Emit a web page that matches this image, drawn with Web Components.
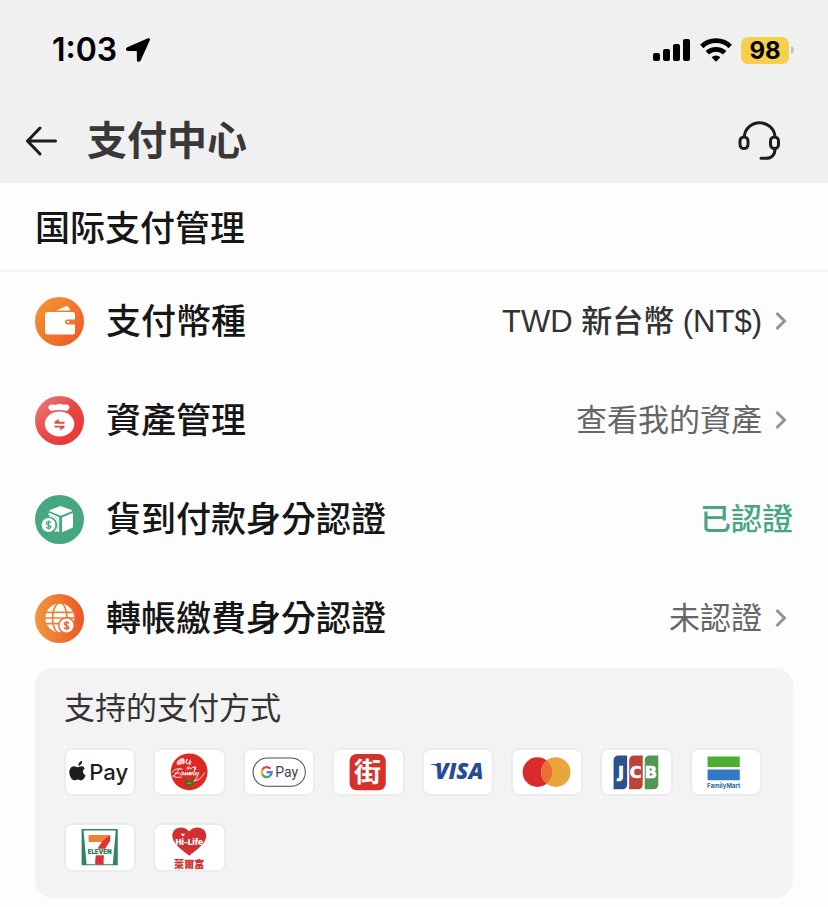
<!DOCTYPE html>
<html lang="zh-Hant">
<head>
<meta charset="utf-8">
<meta name="viewport" content="width=device-width, initial-scale=1">
<title>支付中心</title>
<style>
  body {
    margin: 0;
    background-color: #fdfdfd;
    color: #161616;
    font-family: "Liberation Sans", "Noto Sans CJK TC", sans-serif;
  }
</style>
</head>
<body>
<payment-center></payment-center>

<script>
class StatusBar extends HTMLElement {
  constructor() {
    super();
    this.attachShadow({ mode: "open" });
  }

  connectedCallback() {
    this.shadowRoot.innerHTML = `
      <style>
        :host {
          display: flex;
          align-items: center;
          justify-content: space-between;
          height: 100px;
          padding: 0 33px 0 52px;
          color: #000;
          font-family: Inter, sans-serif;
        }
        .group { display: flex; align-items: center; gap: 9px; }
        .time { font-size: 32px; font-weight: 600; line-height: 40px; }
        .battery { display: flex; align-items: center; gap: 2px; }
        .level {
          width: 48px;
          border-radius: 7px;
          background-color: #f8cf48;
          font-size: 24px;
          font-weight: 700;
          line-height: 27px;
          text-align: center;
        }
        svg { display: block; }
      </style>
      <div class="group">
        <span class="time">${this.getAttribute("time")}</span>
        <svg width="24" height="24" viewBox="0 0 24 24" aria-hidden="true">
          <path d="M22 .3 1.300 9.300c-2 1-1.500 3.700.7 3.700l8 .1c.6 0 .8.2.8.8l.1 8c0 2.300 2.800 2.700 3.800.6L23.900 2c.5-1.200-.6-2.300-1.900-1.700Z"/>
        </svg>
      </div>
      <div class="group">
        <svg width="38" height="24" viewBox="0 0 38 24" aria-hidden="true">
          <rect x="0" y="15" width="7" height="8" rx="2"/>
          <rect x="10" y="11" width="7" height="12" rx="2"/>
          <rect x="20" y="6" width="7" height="17" rx="2"/>
          <rect x="30" y="1" width="7" height="22" rx="2"/>
        </svg>
        <svg width="32" height="24" viewBox="0 0 32 24" aria-hidden="true">
          <g fill="none" stroke="#000" stroke-width="4.800">
            <path d="M1.800 8.400a20.500 20.500 0 0 1 28.400 0"/>
            <path d="M7.300 14.800a12.600 12.600 0 0 1 17.400 0"/>
          </g>
          <path d="M11.600 19.200a6.600 6.600 0 0 1 8.800 0L16 23.700Z"/>
        </svg>
        <div class="battery">
          <span class="level">${this.getAttribute("battery")}</span>
          <svg width="4" height="10" viewBox="0 0 4 10" aria-hidden="true"><path d="M0 1c4 2 4 6 0 8Z" fill="#b5c6c6"/></svg>
        </div>
      </div>
    `;
  }
}
customElements.define("status-bar", StatusBar);


class NavBar extends HTMLElement {
  constructor() {
    super();
    this.attachShadow({ mode: "open" });
  }

  connectedCallback() {
    this.shadowRoot.innerHTML = `
      <style>
        :host {
          display: flex;
          align-items: center;
          height: 82px;
          padding: 0 48px 0 25px;
        }
        button {
          padding: 0;
          border: 0;
          background: none;
          cursor: pointer;
        }
        svg { display: block; fill: none; stroke: #1c1c18; stroke-linecap: round; stroke-linejoin: round; stroke-width: 3; }
        h1 {
          flex: 1;
          margin: 0 0 0 30px;
          color: #383838;
          font-size: 40px;
          font-weight: 700;
          line-height: 60px;
        }
      </style>
      <button type="button" aria-label="返回">
        <svg width="32" height="30" viewBox="0 0 32 30"><path d="M15 2 2.500 15 15 28M2.500 15H30.500"/></svg>
      </button>
      <h1><slot></slot></h1>
      <button type="button" aria-label="客服">
        <svg width="42" height="42" viewBox="0 0 42 42">
          <path d="M6.300 16.500a15.400 15 0 0 1 30.700 0M37 29c0 6-3.500 9.300-9 9.300h-5"/>
          <rect x="2" y="17" width="8" height="11.500" rx="4"/>
          <rect x="32.500" y="17" width="8" height="11.500" rx="4"/>
        </svg>
      </button>
    `;
  }
}
customElements.define("nav-bar", NavBar);


class PayRow extends HTMLElement {
  constructor() {
    super();
    this.attachShadow({ mode: "open" });
  }

  connectedCallback() {
    const href = this.getAttribute("href");
    const content = `
      <slot name="icon"></slot>
      <span class="label">${this.getAttribute("label")}</span>
      <span class="value"><slot></slot></span>
    `;
    const chevron = `<svg width="18" height="22" viewBox="0 0 18 22" aria-hidden="true"><path d="m1.500 2 8 8-8 8"/></svg>`;

    this.shadowRoot.innerHTML = `
      <style>
        :host { display: block; --value-color: #666; --value-weight: 400; }
        :host([tone="dark"]) { --value-color: #333; --value-weight: 500; }
        :host([tone="success"]) { --value-color: #47a582; --value-weight: 500; }
        .row {
          display: flex;
          align-items: center;
          height: 99px;
          padding: 0 35px;
          color: inherit;
          text-decoration: none;
        }
        ::slotted(svg) { flex: none; width: 49px; height: 49px; }
        .label {
          flex: 1;
          margin-left: 22px;
          font-size: 35px;
          font-weight: 500;
          line-height: 52px;
        }
        .value {
          color: var(--value-color);
          font-size: 31px;
          font-weight: var(--value-weight);
          line-height: 46px;
          white-space: nowrap;
        }
        .row > svg { margin-left: 13px; fill: none; stroke: #94948f; stroke-width: 3; }
      </style>
      ${href ? `<a class="row" href="${href}">${content}${chevron}</a>` : `<div class="row">${content}</div>`}
    `;
  }
}
customElements.define("pay-row", PayRow);


class PayCard extends HTMLElement {
  constructor() {
    super();
    this.attachShadow({ mode: "open" });
  }

  connectedCallback() {
    this.shadowRoot.innerHTML = `
      <style>
        :host {
          display: block;
          border-radius: 8px;
          background-color: #fff;
          box-shadow: inset 0 0 0 2px #ececec;
        }
        ::slotted(svg) { display: block; width: 100%; }
      </style>
      <slot></slot>
    `;
  }
}
customElements.define("pay-card", PayCard);


class PayMethods extends HTMLElement {
  constructor() {
    super();
    this.attachShadow({ mode: "open" });
  }

  connectedCallback() {
    this.shadowRoot.innerHTML = `
      <style>
        :host {
          display: block;
          margin: 0 35px;
          padding: 18px 31px 26px 29px;
          border-radius: 18px;
          background-color: #f3f3f3;
        }
        h3 {
          margin: 0 0 16px;
          color: #333;
          font-size: 31px;
          font-weight: 400;
          line-height: 46px;
        }
        .grid {
          display: grid;
          grid-template-columns: repeat(8, 1fr);
          gap: 27px 17px;
        }
      </style>
      <h3>${this.getAttribute("heading")}</h3>
      <div class="grid"><slot></slot></div>
    `;
  }
}
customElements.define("pay-methods", PayMethods);


class PaymentCenter extends HTMLElement {
  constructor() {
    super();
    this.attachShadow({ mode: "open" });
  }

  connectedCallback() {
    this.shadowRoot.innerHTML = `
      <style>
        :host { display: block; padding-bottom: 10px; }
        header { padding-bottom: 1px; background-color: #f0f0f0; }
        h2 {
          margin: 0;
          padding: 17px 35px 18px;
          border-bottom: 2px solid #f3f3f3;
          font-family: "Noto Sans CJK SC", sans-serif;
          font-size: 35px;
          font-weight: 500;
          line-height: 52px;
        }
        text { font-family: Inter, sans-serif; }
      </style>

      <header>
        <status-bar time="1:03" battery="98"></status-bar>
        <nav-bar>支付中心</nav-bar>
      </header>

      <main>
        <h2 lang="zh-Hans">国际支付管理</h2>

        <pay-row label="支付幣種" href="#currency" tone="dark">
          <svg slot="icon" viewBox="0 0 49 49" aria-hidden="true">
            <defs>
              <linearGradient id="orange" x1="0" y1="0" x2="1" y2="1">
                <stop offset="0" stop-color="#f59a32"/><stop offset="1" stop-color="#ec5528"/>
              </linearGradient>
            </defs>
            <circle cx="24.500" cy="24.500" r="24.500" fill="url(#orange)"/>
            <path d="M21 13.500 31 9.200q1.500-.7 2.400.8l2.100 3.500Z" fill="#fff"/>
            <path d="M12.500 15h25a2.500 2.500 0 0 1 2.500 2.500V35a2.500 2.500 0 0 1-2.500 2.500h-25A2.500 2.500 0 0 1 10 35V17.500A2.500 2.500 0 0 1 12.500 15Z" fill="#fff"/>
            <path d="M40.500 22.500h-8a2.500 2.500 0 0 0 0 5h8Z" fill="#ef742c"/>
            <circle cx="33" cy="25" r="1.300" fill="#fff"/>
          </svg>
          TWD 新台幣 (NT$)
        </pay-row>

        <pay-row label="資產管理" href="#assets">
          <svg slot="icon" viewBox="0 0 49 49" aria-hidden="true">
            <defs>
              <linearGradient id="red" x1="0" y1="0" x2="1" y2="1">
                <stop offset="0" stop-color="#e98080"/><stop offset=".5" stop-color="#e84746"/><stop offset="1" stop-color="#e8322c"/>
              </linearGradient>
            </defs>
            <circle cx="24.500" cy="24.500" r="24.500" fill="url(#red)"/>
            <path d="M16 15c-3.500-2-3.500-5.800.2-6.500 2.300-.4 3.500.5 4.900.2 1.800-.9 4.600-1.500 6.400-.1 1.700.7 4.500-1 6.300.9 1.600 1.800.3 4-2.300 5.500-4.700-1.500-10.800-1.500-15.500 0Z" fill="#fff"/>
            <ellipse cx="24.500" cy="28" rx="14.800" ry="12.500" fill="#fff"/>
            <g fill="#e5494a">
              <path d="M19.500 27.700v-1.900l4.300-2.800v2.800h5.700v1.900Z"/>
              <path d="M29.500 29.700v1.900l-4.300 2.800v-2.800h-5.700v-1.900Z"/>
            </g>
          </svg>
          查看我的資產
        </pay-row>

        <pay-row label="貨到付款身分認證" tone="success">
          <svg slot="icon" viewBox="0 0 49 49" aria-hidden="true">
            <circle cx="24.500" cy="24.500" r="24.500" fill="#45a880"/>
            <g fill="#fff" stroke="#fff" stroke-linejoin="round">
              <path d="m25.500 11.500 11.500 4.200-11.300 4.600-11.200-4.600Z"/>
              <path d="m27.500 22.800 10-4.200v13.600l-10 4.400Z"/>
              <path d="m14 18.300 9.700 4.200v14.100L14 32.500Z"/>
            </g>
            <circle cx="14" cy="30" r="9.800" fill="#45a880"/>
            <path d="M14.500 21.200a8.800 8.800 0 0 1 5.500 15.300" fill="none" stroke="#fff" stroke-width="1.300"/>
            <circle cx="13.500" cy="30" r="6.900" fill="#fff"/>
            <path d="M15.700 28.200c-.2-2-4.300-2.100-4.300 0s4.400 1.600 4.400 3.600-4.400 2.100-4.500 0M13.500 25.500v9" fill="none" stroke="#45a880" stroke-width="1.300"/>
          </svg>
          已認證
        </pay-row>

        <pay-row label="轉帳繳費身分認證" href="#transfer">
          <svg slot="icon" viewBox="0 0 49 49" aria-hidden="true">
            <defs>
              <linearGradient id="amber" x1="0" y1="0" x2="1" y2="0">
                <stop offset="0" stop-color="#ee993d"/><stop offset="1" stop-color="#ed5526"/>
              </linearGradient>
            </defs>
            <circle cx="24.500" cy="24.500" r="24.500" fill="url(#amber)"/>
            <circle cx="24.800" cy="24" r="14.500" fill="#fff"/>
            <g fill="none" stroke="#ee8034" stroke-width="1.700">
              <path d="M10 18.300h30M10 24h30M10 29.700h30"/>
              <ellipse cx="24.800" cy="24" rx="7.300" ry="15"/>
            </g>
            <circle cx="31.500" cy="31.500" r="8.400" fill="#ed6c2e"/>
            <circle cx="31.500" cy="31.500" r="7" fill="#fff"/>
            <path d="M33.700 29.700c-.2-2-4.300-2.100-4.300 0s4.400 1.600 4.400 3.600-4.400 2.100-4.500 0M31.500 27v9" fill="none" stroke="#e9652c" stroke-width="1.400"/>
          </svg>
          未認證
        </pay-row>

        <pay-methods heading="支持的支付方式">
          <pay-card>
            <svg viewBox="0 0 72 48" role="img" aria-label="Apple Pay">
              <g fill="#1d1d1f">
                <path d="M14.300 17.700C14 15.300 15.700 13.300 17.900 13c.4 2.300-1.400 4.600-3.600 4.700ZM20.600 20.300c-2.600 1.800-2.300 5.400.9 6.800-.7 2.200-2.400 4.900-4.200 5.100-1.400.1-1.900-.8-3.500-.8s-2.200.8-3.500.8c-2.700.1-5-4.500-5-8 0-3.900 2.400-6 4.800-6 1.500 0 2.700.9 3.600.9.9 0 2.300-1.100 4.200-.9 1.100.1 2.100.6 2.700 2.100Z"/>
                <text x="25" y="32" font-size="22" font-weight="500">Pay</text>
              </g>
            </svg>
          </pay-card>

          <pay-card>
            <svg viewBox="0 0 72 48" role="img" aria-label="We Are Family">
              <circle cx="36" cy="23.700" r="18.300" fill="#dc2a22"/>
              <ellipse cx="27.500" cy="13.500" rx="4.500" ry="2.600" transform="rotate(-35 27.500 13.500)" fill="#f7c9c4"/>
              <g fill="none" stroke="#fff" stroke-linecap="round" stroke-width=".9">
                <path d="M29 12c2-2 2 1 1 4 2-1 3-3 4-5-1 3-1 5 0 5s2-2 3-4M36 16c1.500-.5 3-2.500 1.500-2.500s-2.500 3 0 3"/>
                <path d="M36 19c-2-1-3 2-1.500 2s2-2 2-2 0 2 1 2 1-2 2-2 1-.5 1 .5M41 21c2-.5 2-2.500 1-2.500s-1.500 2.500.5 2.500"/>
                <path d="M19 24c2-3 6-4 10-3M26 21c-2 3-3 6-6 7M22 25h4M30 24c-2-1-4 3-2 3s2-3 2-3 0 3 1 3l1.500-3v3l2-3v3l2-3-.5 3 2-3-.5 3c1 0 2-2 2-3M42 20l-2 7c1.500 0 2.500-2 3-3l-.5 3c1.500 0 2.500-3 3-3-.5 3-2 7-5 9"/>
                <path d="M20 28c2 2 6 1 8 1M39 33c5 0 10-3 12-8"/>
              </g>
              <path d="M31.500 30.500h3v2.500h3v-2.500h3v6q-4.500 2.500-9 0Z" fill="#4a6a25"/>
              <path d="M34 35h4" stroke="#e3983a"/>
            </svg>
          </pay-card>

          <pay-card>
            <svg viewBox="0 0 72 48" role="img" aria-label="Google Pay">
              <rect x="10" y="10" width="52" height="28" rx="14" fill="#fff" stroke="#4d4e50"/>
              <g fill="none" stroke-width="2.400">
                <path d="M27.300 20.700a5 5 0 0 0-8.100.9" stroke="#e2483d"/>
                <path d="M19.200 21.600a5 5 0 0 0 0 4.800" stroke="#f2b72c"/>
                <path d="M19.200 26.400a5 5 0 0 0 7.200 1.700" stroke="#45a35b"/>
                <path d="M26.400 28.100a5 5 0 0 0 2.100-3.900h-5" stroke="#4a83e8"/>
              </g>
              <text x="32" y="29" font-size="14" fill="#454649" style="font-family: Roboto, sans-serif">Pay</text>
            </svg>
          </pay-card>

          <pay-card>
            <svg viewBox="0 0 72 48" role="img" aria-label="街口支付">
              <rect x="17.500" y="6" width="36" height="36" rx="7" fill="#d6302b"/>
              <text x="35.500" y="33.500" font-size="27" font-weight="700" text-anchor="middle" fill="#fff" style="font-family: 'Noto Sans CJK TC', sans-serif">街</text>
            </svg>
          </pay-card>

          <pay-card>
            <svg viewBox="0 0 72 48" role="img" aria-label="VISA">
              <path d="M8.500 16h8l2 5c-2.500-2.400-5.500-4-10-4.500Z" fill="#274b96"/>
              <text x="37" y="31" font-size="22" font-weight="800" font-style="italic" text-anchor="middle" fill="#274b96" style="font-family: 'Open Sans', sans-serif">VISA</text>
            </svg>
          </pay-card>

          <pay-card>
            <svg viewBox="0 0 72 48" role="img" aria-label="Mastercard">
              <circle cx="26.300" cy="24" r="14.700" fill="#d92b2c"/>
              <circle cx="44.500" cy="24" r="14.700" fill="#e8a63d"/>
              <path d="M35.400 12.500a14.700 14.700 0 0 1 0 23 14.700 14.700 0 0 1 0-23Z" fill="#ea7136"/>
            </svg>
          </pay-card>

          <pay-card>
            <svg viewBox="0 0 72 48" role="img" aria-label="JCB">
              <path d="M18.500 7.500h8.500v29a5 5 0 0 1-5 4.500h-8.500V12a5 5 0 0 1 5-4.500Z" fill="#2d508f"/>
              <path d="M34 7.500h8.500v29a5 5 0 0 1-5 4.500H29V12a5 5 0 0 1 5-4.500Z" fill="#bd4339"/>
              <path d="M49.500 7.500H58v29a5 5 0 0 1-5 4.500h-8.500V12a5 5 0 0 1 5-4.500Z" fill="#529653"/>
              <g fill="#fff" stroke="#fff" stroke-width=".6" font-size="16" font-weight="700" text-anchor="middle">
                <text style="font-family: 'DejaVu Sans', sans-serif" y="30"><tspan x="21">J</tspan><tspan x="35.500">C</tspan><tspan x="50.500">B</tspan></text>
              </g>
            </svg>
          </pay-card>

          <pay-card>
            <svg viewBox="0 0 72 48" role="img" aria-label="FamilyMart">
              <path d="M17.500 8.500h32V19h-32Z" fill="#4eae32"/>
              <path d="M17.500 21.500h32V32h-32Z" fill="#3278c6"/>
              <text x="33.500" y="40" font-size="6" font-weight="700" text-anchor="middle" fill="#2a64a6">FamilyMart</text>
            </svg>
          </pay-card>

          <pay-card>
            <svg viewBox="0 0 72 48" role="img" aria-label="7-ELEVEN">
              <path d="M17.500 6h36v36h-36Z" fill="#358363"/>
              <path d="M19.500 7.500h32L48.500 41h-26Z" fill="#fff"/>
              <path d="M24.500 12H46l-5.500 7H24.500Z" fill="#ee8234"/>
              <path d="M46 12v6c-4 5-7 10-6.500 23.500H31C31 31 33 24 39 17.500Z" fill="#db3434"/>
              <path d="M22 25.500h27l-.6 6.500H22.600Z" fill="#fff"/>
              <text x="35.500" y="31.300" font-size="6" font-weight="900" text-anchor="middle" fill="#25774f">ELEVEN</text>
            </svg>
          </pay-card>

          <pay-card>
            <svg viewBox="0 0 72 48" role="img" aria-label="Hi-Life 萊爾富">
              <path d="M36 32.500C29 27 19.200 20.500 19.200 12.500 19.200 4 31 1.500 36 8.500c5-7 17-4.500 17 4 0 8-10 14.500-17 20Z" fill="#d32f30"/>
              <text x="36" y="21.500" font-size="8" font-weight="900" text-anchor="middle" fill="#fff">Hi-Life</text>
              <path d="m29.800 13.500-2-2.200q1-1.400 2-.2 1-1.200 2 .2Z" fill="#fff"/>
              <text x="36" y="44.500" font-size="10" font-weight="900" text-anchor="middle" fill="#ca3736" style="font-family: 'Noto Sans CJK TC', sans-serif">萊爾富</text>
            </svg>
          </pay-card>
        </pay-methods>
      </main>
    `;
  }
}
customElements.define("payment-center", PaymentCenter);
</script>
</body>
</html>
